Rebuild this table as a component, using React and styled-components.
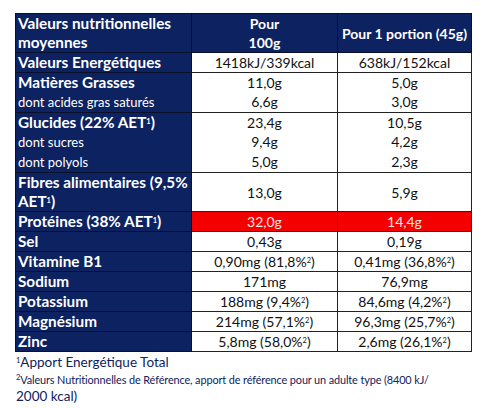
import React from "react";
import styled, { createGlobalStyle } from "styled-components";

const Global = createGlobalStyle`
  html, body { margin: 0; padding: 0; background: #fff; }
  body { font-family: "Lato", "Open Sans", sans-serif; }
`;

const Page = styled.div`
  padding: 13px 15px 0 15px;
  width: 455px;
`;

const Table = styled.table`
  border-collapse: collapse;
  width: 456px;
  table-layout: fixed;
  font-size: 14px;
`;

const Label = styled.td`
  background: #0d2260;
  color: #fff;
  font-weight: 700;
  font-size: 15.3px;
  border: 1px solid #0a0f2a;
  padding: 0 2px 0 2px;
  line-height: 19px;
  vertical-align: ${(p) => (p.$top ? "top" : "middle")};
`;

const Sub = styled.div`
  font-size: 13px;
  font-weight: 400;
  line-height: 20px;
`;

const Head = styled.td`
  background: #0d2260;
  color: #fff;
  font-weight: 700;
  border: 1px solid #0a0f2a;
  text-align: center;
  line-height: 19px;
  padding: 0;
`;

const Val = styled.td`
  background: ${(p) => (p.$red ? "#f40000" : "#fff")};
  color: ${(p) => (p.$red ? "#ffe8e8" : "#111")};
  border: 1px solid #222;
  text-align: center;
  line-height: 19px;
  padding: 0;
  vertical-align: ${(p) => (p.$top ? "top" : "middle")};
`;

const Line = styled.div`
  line-height: ${(p) => (p.$first ? "19px" : "20px")};
`;

const Sup = styled.span`
  display: inline-block;
  font-size: 7.5px;
  line-height: 7px;
  vertical-align: 4px;
`;

const Notes = styled.div`
  color: #0d2260;
  line-height: 17px;
  padding-top: 2px;
  padding-left: 1px;
`;

const Note = styled.div`
  font-size: ${(p) => (p.$tight ? "10.9px" : "13.5px")};
  letter-spacing: ${(p) => (p.$tight ? "-0.12px" : "0")};
  white-space: nowrap;
`;

const rows = [
  { label: "Valeurs Energétiques", a: ["1418kJ/339kcal"], b: ["638kJ/152kcal"] },
  { label: "Matières Grasses", subs: ["dont acides gras saturés"], a: ["11,0g", "6,6g"], b: ["5,0g", "3,0g"] },
  { label: <>Glucides (22% AET<Sup>1</Sup>)</>, subs: ["dont sucres", "dont polyols"], a: ["23,4g", "9,4g", "5,0g"], b: ["10,5g", "4,2g", "2,3g"] },
  { label: <>Fibres alimentaires (9,5%<br />AET<Sup>1</Sup>)</>, a: ["13,0g"], b: ["5,9g"] },
  { label: <>Protéines (38% AET<Sup>1</Sup>)</>, a: ["32,0g"], b: ["14,4g"], red: true },
  { label: "Sel", a: ["0,43g"], b: ["0,19g"] },
  { label: "Vitamine B1", a: [<>0,90mg (81,8%<Sup>2</Sup>)</>], b: [<>0,41mg (36,8%<Sup>2</Sup>)</>] },
  { label: "Sodium", a: ["171mg"], b: ["76,9mg"] },
  { label: "Potassium", a: [<>188mg (9,4%<Sup>2</Sup>)</>], b: [<>84,6mg (4,2%<Sup>2</Sup>)</>] },
  { label: "Magnésium", a: [<>214mg (57,1%<Sup>2</Sup>)</>], b: [<>96,3mg (25,7%<Sup>2</Sup>)</>] },
  { label: "Zinc", a: [<>5,8mg (58,0%<Sup>2</Sup>)</>], b: [<>2,6mg (26,1%<Sup>2</Sup>)</>] },
];

function Cell({ vals, red }) {
  const multi = vals.length > 1;
  return (
    <Val $red={red} $top={multi}>
      {vals.map((v, i) => (
        <Line key={i} $first={i === 0}>{v}</Line>
      ))}
    </Val>
  );
}

export default function App() {
  return (
    <Page>
      <Global />
      <Table>
        <colgroup>
          <col style={{ width: 176 }} />
          <col style={{ width: 146 }} />
          <col style={{ width: 134 }} />
        </colgroup>
        <tbody>
          <tr>
            <Label>Valeurs nutritionnelles<br />moyennes</Label>
            <Head>Pour<br />100g</Head>
            <Head>Pour 1 portion (45g)</Head>
          </tr>
          {rows.map((r, i) => (
            <tr key={i}>
              <Label $top={!!r.subs}>
                {r.label}
                {r.subs && r.subs.map((s, j) => <Sub key={j}>{s}</Sub>)}
              </Label>
              <Cell vals={r.a} red={r.red} />
              <Cell vals={r.b} red={r.red} />
            </tr>
          ))}
        </tbody>
      </Table>
      <Notes>
        <Note><Sup>1</Sup>Apport Energétique Total</Note>
        <Note $tight><Sup>2</Sup>Valeurs Nutritionnelles de Référence, apport de référence pour un adulte type (8400 kJ/</Note>
        <Note>2000 kcal)</Note>
      </Notes>
    </Page>
  );
}
